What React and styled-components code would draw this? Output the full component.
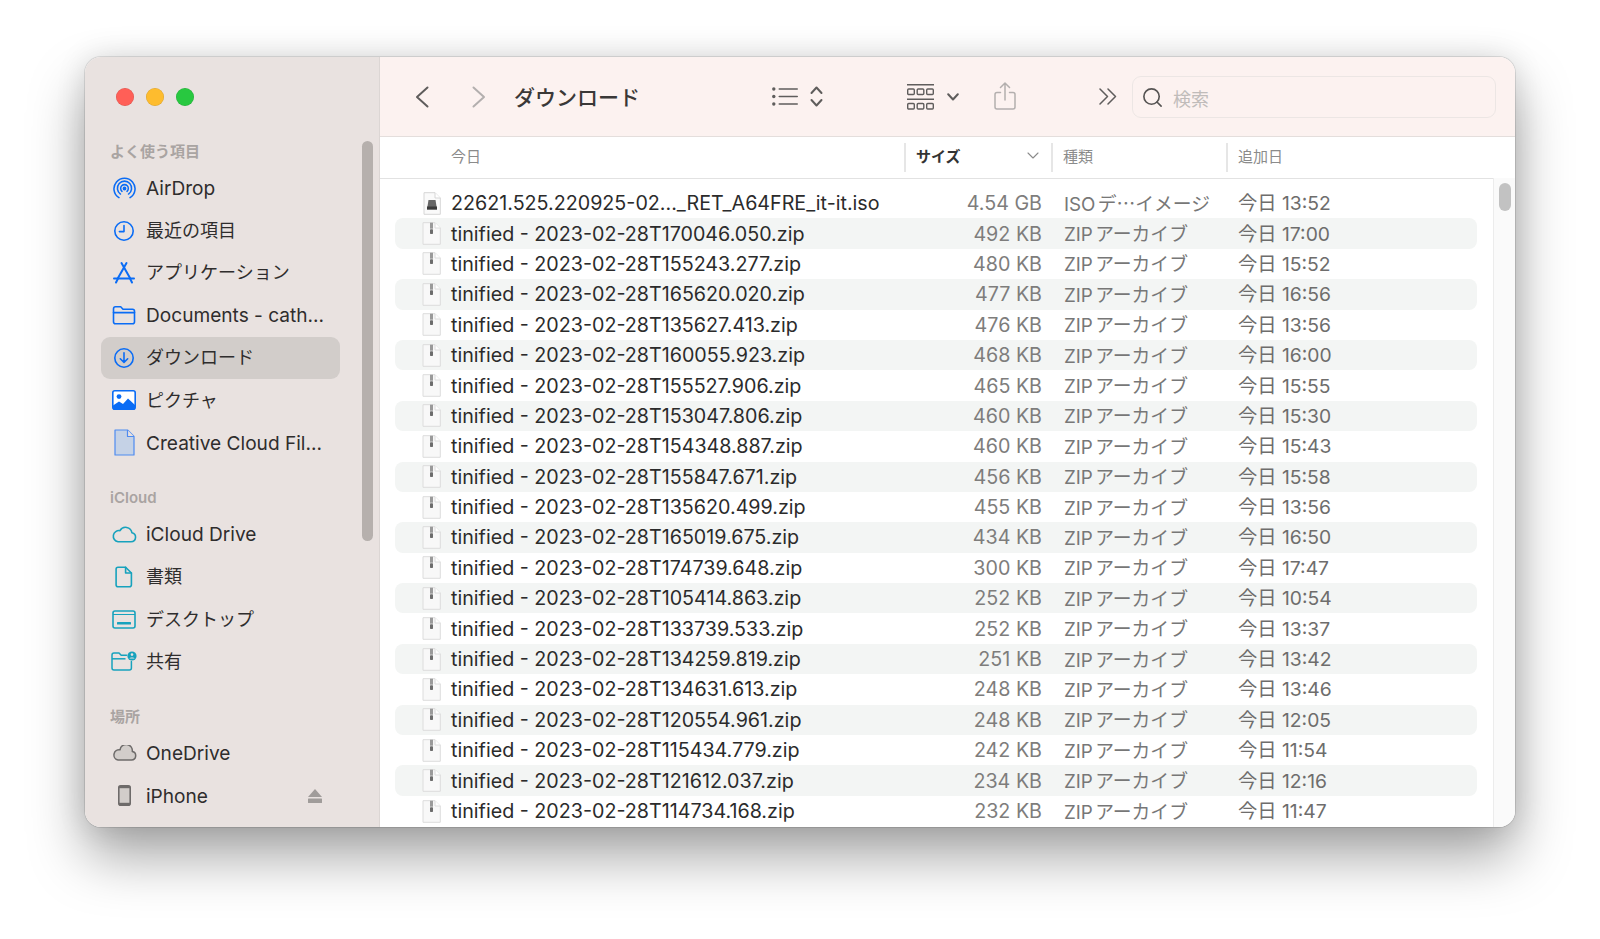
import styled, { createGlobalStyle } from 'styled-components';
import { Search } from 'lucide-react';

const GlobalStyle = createGlobalStyle`
  html, body {
    margin: 0;
    height: 100%;
    background: #ffffff;
    overflow: hidden;
  }
  body {
    font-family: "Inter", "Liberation Sans", "Noto Sans CJK JP", sans-serif;
    -webkit-font-smoothing: antialiased;
  }
`;

const Page = styled.div`
  width: 1600px;
  height: 939px;
  padding: 57px 0 0 85px;
  box-sizing: border-box;
`;

const Window = styled.div`
  width: 1430px;
  height: 770px;
  border-radius: 16px;
  overflow: hidden;
  display: flex;
  background: #fff;
  box-shadow: 0 0 0 1px rgba(0, 0, 0, 0.1), 0 30px 55px rgba(0, 0, 0, 0.35), 0 0 30px rgba(0, 0, 0, 0.12);
`;

const Sidebar = styled.aside`
  width: 295px;
  flex: none;
  position: relative;
  background: #e9e2e0;
  border-right: 1px solid #dcd6d4;
  box-sizing: border-box;
  padding: 31px 0 0 16px;
`;

const Lights = styled.div`
  display: flex;
  gap: 12.2px;
  padding-left: 15px;
  margin-bottom: 36px;
`;

const Light = styled.span`
  width: 18px;
  height: 18px;
  border-radius: 50%;
  background: ${(p) => p.$color};
  box-shadow: inset 0 0 0 0.5px rgba(0, 0, 0, 0.14);
`;

const SectionTitle = styled.div`
  font-size: 15px;
  font-weight: 600;
  line-height: 20px;
  color: #a9a4a2;
  padding-left: 9px;
  margin: ${(p) => p.$top || 0}px 0 5px;
`;

const NavItem = styled.div`
  width: 239px;
  height: 42.4px;
  display: flex;
  align-items: center;
  gap: 9px;
  padding: 0 18px 0 10px;
  box-sizing: border-box;
  border-radius: 9px;
  color: #2f2d2d;
  white-space: nowrap;
  background: ${(p) => (p.$active ? '#d2cdca' : 'transparent')};
`;

const NavLabel = styled.span`
  font-size: ${(p) => (p.$cjk ? 18 : 19.1)}px;
  margin-top: ${(p) => (p.$cjk ? -3 : 0)}px;
`;

const NavIcon = styled.span`
  width: 26px;
  height: 26px;
  flex: none;
  display: flex;
  align-items: center;
  justify-content: center;
  color: ${(p) => p.$color || '#0a6cf5'};
`;

const Eject = styled.svg`
  margin-left: auto;
  flex: none;
`;

const SideThumb = styled.div`
  position: absolute;
  top: 84px;
  right: 6px;
  width: 11.5px;
  height: 400px;
  border-radius: 6px;
  background: #b6b0ad;
`;

const Main = styled.main`
  flex: 1;
  min-width: 0;
  display: flex;
  flex-direction: column;
`;

const Toolbar = styled.header`
  height: 80px;
  flex: none;
  display: flex;
  align-items: center;
  background: #fcf2f0;
  border-bottom: 1px solid #e4dedc;
  box-sizing: border-box;
`;

const ToolButton = styled.span`
  display: flex;
  align-items: center;
  flex: none;
  margin-left: ${(p) => p.$left}px;
  margin-top: ${(p) => (p.$up ? -p.$up : 0)}px;
  color: ${(p) => p.$color || '#5f5d5c'};
`;

const Title = styled.h1`
  margin: -2px 0 0 28.5px;
  width: 258px;
  flex: none;
  font-size: 21px;
  font-weight: 500;
  color: #3a3837;
`;

const SearchBox = styled.div`
  width: 364px;
  height: 42px;
  margin-left: 15px;
  flex: none;
  display: flex;
  align-items: center;
  gap: 9px;
  padding: 2px 0 0 8px;
  box-sizing: border-box;
  border: 1px solid #ece6e4;
  border-radius: 9px;
  font-size: 18px;
  color: #c0bcba;
`;

const HeaderRow = styled.div`
  height: 41px;
  flex: none;
  display: grid;
  grid-template-columns: 524px 147px 175px 1fr;
  align-items: center;
  font-size: 15px;
`;

const HeaderCell = styled.div`
  height: 29px;
  display: flex;
  align-items: center;
  justify-content: space-between;
  box-sizing: border-box;
  padding: 0 12px 4px ${(p) => p.$pad || 10}px;
  border-left: ${(p) => (p.$first ? 'none' : '2px solid #e6e6e6')};
  color: ${(p) => (p.$strong ? '#333' : '#8b8b8b')};
  font-weight: ${(p) => (p.$strong ? 700 : 400)};
`;

const Body = styled.div`
  flex: 1;
  min-height: 0;
  display: flex;
`;

const List = styled.div`
  flex: 1;
  min-width: 0;
  padding: 9px 16px 0 15px;
  border-top: 1px solid #e2e2e2;
  overflow: hidden;
`;

const Row = styled.div`
  height: 30.4px;
  display: grid;
  grid-template-columns: 56px 481px 110px 196px 1fr;
  align-items: center;
  border-radius: 8px;
  font-size: 19.7px;
  white-space: nowrap;
  background: ${(p) => (p.$odd ? '#f3f5f4' : 'transparent')};
`;

const FileIcon = styled.span`
  display: flex;
  justify-content: flex-end;
  padding-right: 10px;
`;

const FileName = styled.span`
  color: #2b2b2b;
`;

const Size = styled.span`
  text-align: right;
  color: #7e7d7c;
`;

const Kind = styled.span`
  padding-left: 22px;
  margin-top: -2px;
  font-size: 18.8px;
  word-spacing: -3px;
  color: #777;
`;

const Added = styled.span`
  margin-top: -2px;
  font-size: 19.3px;
  color: #6e6d6c;
`;

const Scroller = styled.div`
  width: 22px;
  flex: none;
  position: relative;
  background: #fafafa;
  border-left: 1px solid #ececec;
  box-sizing: border-box;
`;

const ScrollThumb = styled.div`
  position: absolute;
  top: 5px;
  left: 5px;
  width: 12px;
  height: 28px;
  border-radius: 6px;
  background: #c2c2c2;
`;

const stroke = { fill: 'none', stroke: 'currentColor', strokeWidth: 1.6, strokeLinecap: 'round', strokeLinejoin: 'round' };

function AirDropIcon() {
  return (
    <svg width="23" height="23" viewBox="0 0 24 24" {...stroke}>
      <path d="M6.2 21.6a11 11 0 1 1 11.6 0" />
      <path d="M7.8 17.8a7.4 7.4 0 1 1 8.4 0" />
      <path d="M9.4 15a4 4 0 1 1 5.2 0" />
      <circle cx="12" cy="12" r="1.2" fill="currentColor" />
    </svg>
  );
}

function ClockIcon() {
  return (
    <svg width="22" height="22" viewBox="0 0 22 22" {...stroke}>
      <circle cx="11" cy="11" r="9.2" />
      <path d="M11 5.5V11.6H6.4" />
    </svg>
  );
}

function AppsIcon() {
  return (
    <svg width="24" height="24" viewBox="0 0 24 24" {...stroke} strokeWidth="2">
      <path d="M9.5 2l8.5 15M14.5 2L6 17" />
      <path d="M2 17.5h20" />
      <path d="M4 21.5l2-4M20 21.5l-2-4" />
    </svg>
  );
}

function FolderIcon() {
  return (
    <svg width="24" height="20" viewBox="0 0 24 20" {...stroke}>
      <path d="M1.5 4c0-1.3.8-2.2 2-2.2h5.2l2.3 2.4h9.5c1.3 0 2 .8 2 2v10.6c0 1.2-.7 2-2 2h-17c-1.2 0-2-.8-2-2z" />
      <path d="M1.5 7.6h21" />
    </svg>
  );
}

function DownloadIcon() {
  return (
    <svg width="22" height="22" viewBox="0 0 22 22" {...stroke}>
      <circle cx="11" cy="11" r="9.2" />
      <path d="M11 5.8v9.4M7.3 11.8l3.7 3.6 3.7-3.6" />
    </svg>
  );
}

function PictureIcon() {
  return (
    <svg width="24" height="20" viewBox="0 0 24 20">
      <rect x="0.8" y="0.8" width="22.4" height="18.4" rx="2" fill="#fff" stroke="currentColor" strokeWidth="1.6" />
      <circle cx="7" cy="6.6" r="2.4" fill="currentColor" />
      <path d="M1 18.5v-3l6-4 4 2.6 5-5.6 7 6.6v3.4a1 1 0 0 1-1 1H2a1 1 0 0 1-1-1z" fill="currentColor" />
    </svg>
  );
}

function CloudFileIcon() {
  return (
    <svg width="21" height="27" viewBox="0 0 21 27">
      <path d="M1 1h12.5L20 7.5V26H1z" fill="#c5d2e6" stroke="#4f8bf0" strokeWidth="1.2" strokeLinejoin="round" />
      <path d="M13.5 1v6.5H20" fill="#e9e2e0" stroke="#4f8bf0" strokeWidth="1.2" strokeLinejoin="round" />
    </svg>
  );
}

function CloudIcon() {
  return (
    <svg width="25" height="18" viewBox="0 0 25 18" {...stroke}>
      <path d="M6 16.8h13a4.6 4.6 0 0 0 .9-9.1A6.4 6.4 0 0 0 8 5.6 5.6 5.6 0 0 0 6 16.8z" />
    </svg>
  );
}

function DocIcon() {
  return (
    <svg width="18" height="22" viewBox="0 0 18 22" {...stroke}>
      <path d="M3 1.2h7.6L16.4 7v11.8c0 1.2-.7 2-2 2H3c-1.2 0-1.9-.8-1.9-2V3.2c0-1.2.7-2 1.9-2z" />
      <path d="M10.6 1.2V7h5.8" />
    </svg>
  );
}

function DesktopIcon() {
  return (
    <svg width="24" height="19" viewBox="0 0 24 19">
      <rect x="1" y="1" width="22" height="17" rx="2" fill="none" stroke="currentColor" strokeWidth="1.6" />
      <path d="M1 4.5h22" stroke="currentColor" strokeWidth="1" />
      <rect x="5" y="12" width="14" height="2.6" rx="0.5" fill="currentColor" />
    </svg>
  );
}

function SharedIcon() {
  return (
    <svg width="26" height="20" viewBox="0 0 26 20">
      <path d="M15.5 4.3H10.2L8 2H3C1.7 2 1 2.7 1 4v13c0 1.2.7 2 2 2h15.4c1.3 0 2-.8 2-2v-6.5" fill="none" stroke="currentColor" strokeWidth="1.5" strokeLinejoin="round" strokeLinecap="round" />
      <path d="M1 7.8h13.5" stroke="currentColor" strokeWidth="1.5" />
      <circle cx="21" cy="5" r="4.6" fill="currentColor" />
      <circle cx="21" cy="3.6" r="1.3" fill="#e9e2e0" />
      <path d="M18.3 7.6c.5-1.6 4.9-1.6 5.4 0z" fill="#e9e2e0" />
    </svg>
  );
}

function OneDriveIcon() {
  return (
    <svg width="25" height="16" viewBox="0 0 25 16">
      <path d="M6 15h13.5a4.3 4.3 0 0 0 .8-8.5A6.2 6.2 0 0 0 8 4.8 5.2 5.2 0 0 0 6 15z" fill="#d2cdca" stroke="currentColor" strokeWidth="1.5" strokeLinejoin="round" />
    </svg>
  );
}

function PhoneIcon() {
  return (
    <svg width="13" height="21" viewBox="0 0 13 21">
      <rect x="0.8" y="0.8" width="11.4" height="19.4" rx="2" fill="#d2cdca" stroke="currentColor" strokeWidth="1.6" />
      <rect x="0.8" y="0.8" width="11.4" height="2.4" fill="currentColor" />
      <rect x="0.8" y="17.8" width="11.4" height="2.4" fill="currentColor" />
    </svg>
  );
}

function BackIcon() {
  return (
    <svg width="14" height="22" viewBox="0 0 14 22" {...stroke} strokeWidth="2">
      <path d="M12.5 1.5L2 11l10.5 9.5" />
    </svg>
  );
}

function ForwardIcon() {
  return (
    <svg width="14" height="22" viewBox="0 0 14 22" {...stroke} strokeWidth="2">
      <path d="M1.5 1.5L12 11 1.5 20.5" />
    </svg>
  );
}

function ListViewIcon() {
  return (
    <svg width="26" height="19" viewBox="0 0 26 19" fill="currentColor">
      <circle cx="1.8" cy="2" r="1.7" />
      <circle cx="1.8" cy="9.5" r="1.7" />
      <circle cx="1.8" cy="17" r="1.7" />
      <rect x="6.5" y="1.2" width="19.5" height="1.6" rx="0.8" />
      <rect x="6.5" y="8.7" width="19.5" height="1.6" rx="0.8" />
      <rect x="6.5" y="16.2" width="19.5" height="1.6" rx="0.8" />
    </svg>
  );
}

function UpDownIcon() {
  return (
    <svg width="13" height="21" viewBox="0 0 13 21" {...stroke} strokeWidth="2">
      <path d="M1.5 7l5-5.5 5 5.5M1.5 14l5 5.5 5-5.5" />
    </svg>
  );
}

function GroupIcon() {
  const cells = [0, 9.5, 19];
  return (
    <svg width="27" height="26" viewBox="0 0 27 26">
      <rect width="27" height="1.5" fill="currentColor" />
      <rect y="14.5" width="27" height="1.5" fill="currentColor" />
      {cells.map((x) => (
        <g key={x} fill="none" stroke="currentColor" strokeWidth="1.4">
          <rect x={x + 0.7} y="5" width="6.6" height="5.5" rx="1" />
          <rect x={x + 0.7} y="19.5" width="6.6" height="5.5" rx="1" />
        </g>
      ))}
    </svg>
  );
}

function CaretIcon() {
  return (
    <svg width="12" height="8" viewBox="0 0 12 8" {...stroke} strokeWidth="2">
      <path d="M1.2 1.3L6 6.5l4.8-5.2" />
    </svg>
  );
}

function SortCaretIcon() {
  return (
    <svg width="12" height="7" viewBox="0 0 12 7" {...stroke} strokeWidth="1.1" color="#8b8b8b">
      <path d="M1 1l5 5 5-5" />
    </svg>
  );
}

function ShareIcon() {
  return (
    <svg width="22" height="28" viewBox="0 0 22 28" {...stroke} strokeWidth="1.5">
      <path d="M6.5 10.5H3c-1.3 0-2 .7-2 2V25c0 1.3.7 2 2 2h16c1.3 0 2-.7 2-2V12.5c0-1.3-.7-2-2-2h-3.5" />
      <path d="M11 18V1.5M6.5 5.5L11 1l4.5 4.5" />
    </svg>
  );
}

function MoreIcon() {
  return (
    <svg width="18" height="17" viewBox="0 0 18 17" {...stroke} strokeWidth="1.5">
      <path d="M1 1l7.5 7.5L1 16M9 1l7.5 7.5L9 16" />
    </svg>
  );
}

function IsoIcon() {
  return (
    <svg width="18" height="23" viewBox="0 0 18 23">
      <path d="M1 .7h11L17.3 6v16.3H1z" fill="#fafafa" stroke="#d6d6d6" strokeWidth="1" strokeLinejoin="round" />
      <path d="M12 .7V6h5.3" fill="#fff" stroke="#d6d6d6" strokeWidth="1" strokeLinejoin="round" />
      <path d="M5.5 8h7l1.5 9.5H4z" fill="#666" />
      <rect x="4" y="14.5" width="10" height="3" fill="#3a3a3a" />
    </svg>
  );
}

function ZipIcon() {
  return (
    <svg width="19" height="23" viewBox="0 0 19 23">
      <path d="M1 .7h12L18.3 6v16.3H1z" fill="#f8f8f8" stroke="#dcdcdc" strokeWidth="1" strokeLinejoin="round" />
      <path d="M13 .7V6h5.3" fill="#fff" stroke="#dcdcdc" strokeWidth="1" strokeLinejoin="round" />
      <rect x="8" y="0.7" width="3" height="6" fill="#9a9a9a" />
      <rect x="8" y="7.2" width="3" height="4.8" rx="0.7" fill="#6c6c6c" />
    </svg>
  );
}

const favorites = [
  { label: 'AirDrop', icon: <AirDropIcon /> },
  { label: '最近の項目', icon: <ClockIcon />, cjk: true },
  { label: 'アプリケーション', icon: <AppsIcon />, cjk: true },
  { label: 'Documents - cath...', icon: <FolderIcon /> },
  { label: 'ダウンロード', icon: <DownloadIcon />, active: true, cjk: true },
  { label: 'ピクチャ', icon: <PictureIcon />, cjk: true },
  { label: 'Creative Cloud Fil...', icon: <CloudFileIcon /> },
];

const icloud = [
  { label: 'iCloud Drive', icon: <CloudIcon /> },
  { label: '書類', icon: <DocIcon />, cjk: true },
  { label: 'デスクトップ', icon: <DesktopIcon />, cjk: true },
  { label: '共有', icon: <SharedIcon />, cjk: true },
];

const places = [
  { label: 'OneDrive', icon: <OneDriveIcon /> },
  { label: 'iPhone', icon: <PhoneIcon />, eject: true },
];

const files = [
  ['22621.525.220925-02..._RET_A64FRE_it-it.iso', '4.54 GB', 'ISO デ⋯イメージ', '今日 13:52'],
  ['tinified - 2023-02-28T170046.050.zip', '492 KB', 'ZIP アーカイブ', '今日 17:00'],
  ['tinified - 2023-02-28T155243.277.zip', '480 KB', 'ZIP アーカイブ', '今日 15:52'],
  ['tinified - 2023-02-28T165620.020.zip', '477 KB', 'ZIP アーカイブ', '今日 16:56'],
  ['tinified - 2023-02-28T135627.413.zip', '476 KB', 'ZIP アーカイブ', '今日 13:56'],
  ['tinified - 2023-02-28T160055.923.zip', '468 KB', 'ZIP アーカイブ', '今日 16:00'],
  ['tinified - 2023-02-28T155527.906.zip', '465 KB', 'ZIP アーカイブ', '今日 15:55'],
  ['tinified - 2023-02-28T153047.806.zip', '460 KB', 'ZIP アーカイブ', '今日 15:30'],
  ['tinified - 2023-02-28T154348.887.zip', '460 KB', 'ZIP アーカイブ', '今日 15:43'],
  ['tinified - 2023-02-28T155847.671.zip', '456 KB', 'ZIP アーカイブ', '今日 15:58'],
  ['tinified - 2023-02-28T135620.499.zip', '455 KB', 'ZIP アーカイブ', '今日 13:56'],
  ['tinified - 2023-02-28T165019.675.zip', '434 KB', 'ZIP アーカイブ', '今日 16:50'],
  ['tinified - 2023-02-28T174739.648.zip', '300 KB', 'ZIP アーカイブ', '今日 17:47'],
  ['tinified - 2023-02-28T105414.863.zip', '252 KB', 'ZIP アーカイブ', '今日 10:54'],
  ['tinified - 2023-02-28T133739.533.zip', '252 KB', 'ZIP アーカイブ', '今日 13:37'],
  ['tinified - 2023-02-28T134259.819.zip', '251 KB', 'ZIP アーカイブ', '今日 13:42'],
  ['tinified - 2023-02-28T134631.613.zip', '248 KB', 'ZIP アーカイブ', '今日 13:46'],
  ['tinified - 2023-02-28T120554.961.zip', '248 KB', 'ZIP アーカイブ', '今日 12:05'],
  ['tinified - 2023-02-28T115434.779.zip', '242 KB', 'ZIP アーカイブ', '今日 11:54'],
  ['tinified - 2023-02-28T121612.037.zip', '234 KB', 'ZIP アーカイブ', '今日 12:16'],
  ['tinified - 2023-02-28T114734.168.zip', '232 KB', 'ZIP アーカイブ', '今日 11:47'],
];

function NavGroup({ items, color }) {
  return items.map((item) => (
    <NavItem key={item.label} $active={item.active}>
      <NavIcon $color={color}>{item.icon}</NavIcon>
      <NavLabel $cjk={item.cjk}>{item.label}</NavLabel>
      {item.eject && (
        <Eject width="14" height="14" viewBox="0 0 14 14" fill="#a09c9a">
          <path d="M7 0l7 8H0z" />
          <rect y="9.5" width="14" height="4.5" rx="0.5" />
        </Eject>
      )}
    </NavItem>
  ));
}

export default function App() {
  return (
    <Page>
      <GlobalStyle />
      <Window>
        <Sidebar>
          <Lights>
            <Light $color="#ff5f57" />
            <Light $color="#febc2e" />
            <Light $color="#28c840" />
          </Lights>
          <SectionTitle>よく使う項目</SectionTitle>
          <NavGroup items={favorites} />
          <SectionTitle $top={24.4}>iCloud</SectionTitle>
          <NavGroup items={icloud} color="#17a2bd" />
          <SectionTitle $top={24.6}>場所</SectionTitle>
          <NavGroup items={places} color="#6e6b6a" />
          <SideThumb />
        </Sidebar>
        <Main>
          <Toolbar>
            <ToolButton $left={35}><BackIcon /></ToolButton>
            <ToolButton $left={42.5} $color="#b3afae"><ForwardIcon /></ToolButton>
            <Title>ダウンロード</Title>
            <ToolButton $left={0}><ListViewIcon /></ToolButton>
            <ToolButton $left={12}><UpDownIcon /></ToolButton>
            <ToolButton $left={84}><GroupIcon /></ToolButton>
            <ToolButton $left={13}><CaretIcon /></ToolButton>
            <ToolButton $left={35} $up={2} $color="#b3afae"><ShareIcon /></ToolButton>
            <ToolButton $left={83}><MoreIcon /></ToolButton>
            <SearchBox>
              <Search size={23} strokeWidth={1.7} color="#565453" />
              検索
            </SearchBox>
          </Toolbar>
          <HeaderRow>
            <HeaderCell $first $pad={71}>今日</HeaderCell>
            <HeaderCell $strong>サイズ<SortCaretIcon /></HeaderCell>
            <HeaderCell>種類</HeaderCell>
            <HeaderCell>追加日</HeaderCell>
          </HeaderRow>
          <Body>
            <List>
              {files.map((file, index) => (
                <Row key={file[0]} $odd={index % 2 === 1}>
                  <FileIcon>{index === 0 ? <IsoIcon /> : <ZipIcon />}</FileIcon>
                  <FileName>{file[0]}</FileName>
                  <Size>{file[1]}</Size>
                  <Kind>{file[2]}</Kind>
                  <Added>{file[3]}</Added>
                </Row>
              ))}
            </List>
            <Scroller>
              <ScrollThumb />
            </Scroller>
          </Body>
        </Main>
      </Window>
    </Page>
  );
}
